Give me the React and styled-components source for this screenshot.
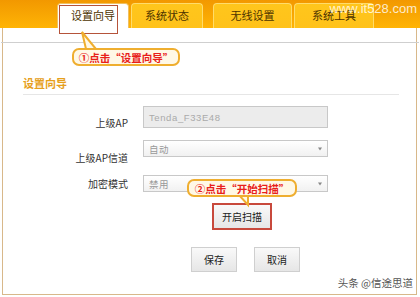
import styled, { createGlobalStyle } from 'styled-components';

const GlobalStyle = createGlobalStyle`
  html, body { margin: 0; padding: 0; background: #fff; }
  body { font-family: "Liberation Sans", "Noto Sans CJK SC", sans-serif; }
`;

const Page = styled.div`
  position: relative;
  width: 420px;
  height: 297px;
  overflow: hidden;
  background: #fff;
  display: flex;
  flex-direction: column;
`;

/* top tab bar */
const TopBar = styled.div`
  height: 28px;
  flex: none;
  background: linear-gradient(#f29800, #ffb405);
  display: flex;
  align-items: flex-end;
  padding-left: 57px;
  gap: 2px;
`;

const Tab = styled.div`
  position: relative;
  width: ${p => p.w || 74}px;
  height: 25px;
  margin-right: ${p => p.mr || 0}px;
  box-sizing: border-box;
  border: 1px solid ${p => (p.active ? '#f0c060' : '#ffdc6a')};
  border-bottom: none;
  border-radius: 4px 4px 0 0;
  background: ${p => (p.active ? '#fff' : 'linear-gradient(#ffc61c, #ffc21a)')};
  font-family: "Noto Sans CJK SC", sans-serif;
  font-size: 11px;
  color: #4d3300;
  display: flex;
  align-items: center;
  justify-content: center;
  padding-bottom: 2px;
`;

const TabMark = styled.div`
  position: absolute;
  left: 1px;
  top: 1px;
  width: 59px;
  height: 29px;
  border: 1.5px solid #b5533a;
  box-sizing: border-box;
`;

const SiteMark = styled.div`
  position: absolute;
  right: 3px;
  top: 1px;
  font-family: "Liberation Sans", sans-serif;
  font-size: 13px;
  color: rgba(255, 255, 255, 0.8);
`;

/* body panel */
const Panel = styled.div`
  flex: 1;
  margin: 0 3px 2px 2px;
  border-left: 1px solid #d8b88a;
  border-right: 1px solid #d8b88a;
  border-bottom: 1px solid #d8b88a;
  display: flex;
  flex-direction: column;
`;

const HeadStrip = styled.div`
  height: 14px;
  border-bottom: 1px solid #cfcfcf;
  margin: 0 -3px 0 -2px;
`;

const Section = styled.div`
  margin: 32px 17px 0 20px;
`;

const Title = styled.div`
  font-family: "Noto Sans CJK SC", sans-serif;
  font-size: 11px;
  font-weight: bold;
  color: #e6a01c;
  padding-bottom: 3px;
  border-bottom: 1px solid #e6e6e6;
`;

const Form = styled.div`
  display: grid;
  grid-template-columns: 105px 185px;
  column-gap: 15px;
  margin-top: 11px;
  align-items: center;
`;

const Label = styled.div`
  font-family: "Noto Sans CJK SC", sans-serif;
  font-size: 10px;
  color: #333;
  text-align: right;
  height: ${p => p.h}px;
  line-height: ${p => p.h}px;
`;

const Field = styled.div`
  position: relative;
  height: ${p => p.h}px;
  margin-bottom: ${p => p.mb || 0}px;
  box-sizing: border-box;
  border: 1px solid #c8c8c8;
  background: ${p => (p.disabled ? '#ececec' : 'linear-gradient(#fff, #f1f1f1)')};
  font-family: "Liberation Sans", "Noto Sans CJK SC", sans-serif;
  font-size: 9.5px;
  letter-spacing: 0.6px;
  color: #aaa;
  display: flex;
  align-items: center;
  padding-left: 5px;
`;

const Muted = styled.span`
  color: #999;
`;

const Arrow = styled.span`
  position: absolute;
  right: 5px;
  top: 50%;
  transform: translateY(-50%);
  width: 0;
  height: 0;
  border-left: 2px solid transparent;
  border-right: 2px solid transparent;
  border-top: 3px solid #888;
`;

const ScanRow = styled.div`
  padding-left: 189px;
  margin-top: 11px;
`;

const Button = styled.div`
  width: ${p => p.w}px;
  height: ${p => p.h}px;
  box-sizing: border-box;
  border: ${p => (p.marked ? '2px solid #c8493c' : '1px solid #cfcfcf')};
  background: linear-gradient(#f9f9f9, #e6e6e6);
  font-family: "Noto Sans CJK SC", sans-serif;
  font-size: 10px;
  color: #222;
  display: flex;
  align-items: center;
  justify-content: center;
`;

const ButtonRow = styled.div`
  display: flex;
  gap: 17px;
  padding-left: 168px;
  margin-top: 17px;
`;

const Footer = styled.div`
  margin-top: auto;
  align-self: flex-end;
  padding: 0 3px 4px 0;
  font-family: "Noto Sans CJK SC", sans-serif;
  font-size: 10.5px;
  color: #555;
`;

/* callouts */
const Callout = styled.div`
  position: absolute;
  left: ${p => p.x}px;
  top: ${p => p.y}px;
  width: ${p => p.w}px;
  height: 18px;
  box-sizing: border-box;
  border: 2px solid #efae2f;
  border-radius: 7px;
  background: #fff8e6;
  font-family: "Noto Sans CJK SC", sans-serif;
  font-weight: bold;
  font-size: 10.5px;
  color: #e8201a;
  display: flex;
  align-items: center;
  justify-content: center;
  white-space: nowrap;
`;

const Pointer = styled.svg`
  position: absolute;
  left: ${p => p.x}px;
  top: ${p => p.y}px;
  overflow: visible;
`;

export default function App() {
  return (
    <Page>
      <GlobalStyle />
      <TopBar>
        <Tab active w={72}>
          设置向导
          <TabMark />
        </Tab>
        <Tab w={72} mr={8}>系统状态</Tab>
        <Tab w={79}>无线设置</Tab>
        <Tab w={80}>系统工具</Tab>
      </TopBar>
      <SiteMark>www.it528.com</SiteMark>

      <Panel>
        <HeadStrip />
        <Section>
          <Title>设置向导</Title>
          <Form>
            <Label h={22}>上级AP</Label>
            <Field h={22} disabled mb={12}>Tenda_F33E48</Field>
            <Label h={17}>上级AP信道</Label>
            <Field h={17} mb={18}>
              <Muted>自动</Muted>
              <Arrow />
            </Field>
            <Label h={17}>加密模式</Label>
            <Field h={17}>
              <Muted>禁用</Muted>
              <Arrow />
            </Field>
          </Form>
          <ScanRow>
            <Button w={60} h={27} marked>开启扫描</Button>
          </ScanRow>
          <ButtonRow>
            <Button w={46} h={25}>保存</Button>
            <Button w={46} h={25}>取消</Button>
          </ButtonRow>
        </Section>
        <Footer>头条 @信途思道</Footer>
      </Panel>

      <Pointer x={80} y={32} width="20" height="18">
        <polygon points="2,0 16,17 6,17" fill="#fff8e6" stroke="#efae2f" strokeWidth="2" />
      </Pointer>
      <Callout x={72} y={48} w={108}>①点击“设置向导”</Callout>

      <Pointer x={236} y={194} width="16" height="14">
        <polygon points="2,0 12,0 12,11" fill="#fff8e6" stroke="#efae2f" strokeWidth="2" />
      </Pointer>
      <Callout x={187} y={179} w={110}>②点击“开始扫描”</Callout>
    </Page>
  );
}
